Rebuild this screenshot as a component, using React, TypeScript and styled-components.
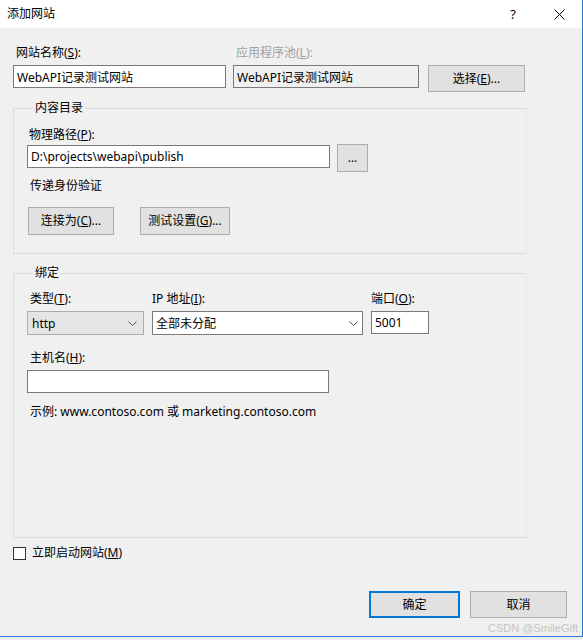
import styled, { createGlobalStyle } from "styled-components";

const GlobalStyle = createGlobalStyle`
  html, body {
    margin: 0;
    padding: 0;
    background: #f0f0f0;
  }
  body {
    font-family: "Noto Sans", "Noto Sans CJK SC", sans-serif;
    font-size: 12px;
    color: #000;
  }
`;

const Window = styled.div`
    position: relative;
    width: 583px;
    height: 637px;
    box-sizing: border-box;
    border-right: 1px solid #2b7bd6;
    border-bottom: 1px solid #2b7bd6;
    background: #f0f0f0;
    display: flex;
    flex-direction: column;
`;

const TitleBar = styled.div`
    height: 28px;
    flex: none;
    background: #fff;
    display: flex;
    align-items: center;
`;

const TitleText = styled.div`
    flex: 1;
    padding-left: 7px;
    line-height: 16px;
`;

const CaptionButton = styled.div`
    width: 46px;
    height: 28px;
    display: flex;
    align-items: center;
    justify-content: center;
    font-size: 13px;
`;

const Content = styled.div`
    padding: 17px 0 0 13px;
    display: flex;
    flex-direction: column;
`;

const TopGrid = styled.div`
    display: grid;
    grid-template-columns: 213px 186px 97px;
    column-gap: 7px;
    row-gap: 4px;
    align-items: start;
`;

const Label = styled.div<{ $indent?: number; $muted?: boolean; $mt?: number }>`
    line-height: 16px;
    padding-left: ${(p) => p.$indent ?? 3}px;
    margin-top: ${(p) => p.$mt ?? 0}px;
    color: ${(p) => (p.$muted ? "#a0a0a0" : "#000")};
    white-space: nowrap;
`;

const TextBox = styled.input<{ $width?: number; $height?: number; $disabled?: boolean }>`
    box-sizing: border-box;
    width: ${(p) => (p.$width ? `${p.$width}px` : "100%")};
    height: ${(p) => p.$height ?? 23}px;
    margin: 0;
    padding: 0 3px;
    border: 1px solid #7a7a7a;
    border-radius: 0;
    background: ${(p) => (p.$disabled ? "#f0f0f0" : "#fff")};
    font: inherit;
    color: #000;
    outline: none;
`;

const Button = styled.div<{ $width: number; $height?: number; $primary?: boolean }>`
    box-sizing: border-box;
    width: ${(p) => p.$width}px;
    height: ${(p) => p.$height ?? 28}px;
    display: flex;
    align-items: center;
    justify-content: center;
    background: #e1e1e1;
    border: ${(p) => (p.$primary ? "2px solid #0078d7" : "1px solid #adadad")};
    line-height: 16px;
    white-space: nowrap;
`;

const SelectButton = styled(Button)`
    margin-left: 2px;
    grid-row: 2;
    grid-column: 3;
`;

const Group = styled.fieldset<{ $mt: number; $pb: number }>`
    box-sizing: border-box;
    width: 514px;
    min-width: 0;
    margin: ${(p) => p.$mt}px 0 0 0;
    padding: 0 0 ${(p) => p.$pb}px 13px;
    border: 1px solid #dcdcdc;
    border-right-color: #e6e6e6;
`;

const Legend = styled.legend`
    margin-left: 6px;
    padding: 0 2px;
    line-height: 16px;
`;

const PathRow = styled.div`
    display: flex;
    align-items: flex-start;
    gap: 7px;
    margin-top: 2px;
`;

const BrowseButton = styled(Button)`
    margin-top: -1px;
`;

const ButtonRow = styled.div`
    display: flex;
    gap: 26px;
    margin-top: 13px;
    padding-left: 1px;
`;

const BindingGrid = styled.div`
    display: grid;
    grid-template-columns: 117px 211px 58px;
    column-gap: 8px;
    row-gap: 4px;
    margin-top: 10px;
    align-items: start;
`;

const ComboBox = styled.div<{ $readonly?: boolean }>`
    box-sizing: border-box;
    height: 24px;
    display: flex;
    align-items: center;
    justify-content: space-between;
    padding: 0 ${(p) => (p.$readonly ? 6 : 4)}px 0 ${(p) => (p.$readonly ? 4 : 3)}px;
    background: ${(p) => (p.$readonly ? "#e5e5e5" : "#fff")};
    border: 1px solid ${(p) => (p.$readonly ? "#acacac" : "#7a7a7a")};
    white-space: nowrap;
`;

const Field = styled.div<{ $mt?: number }>`
    margin-top: ${(p) => p.$mt ?? 0}px;
`;

const CheckRow = styled.label`
    display: flex;
    align-items: center;
    gap: 6px;
    margin-top: 7px;
    line-height: 16px;
`;

const CheckBox = styled.span`
    box-sizing: border-box;
    width: 13px;
    height: 13px;
    border: 1px solid #333;
    background: #fff;
`;

const Footer = styled.div`
    width: 554px;
    display: flex;
    justify-content: flex-end;
    gap: 10px;
    margin-top: 30px;
`;

const Watermark = styled.div`
    position: absolute;
    right: 4px;
    bottom: 1px;
    font-family: "Liberation Sans", Arial, sans-serif;
    font-size: 11px;
    line-height: 14px;
    color: #c4c4c4;
`;

const Chevron = () => (
    <svg width="9" height="5" viewBox="0 0 9 5">
        <polyline points="0.5,0.5 4.5,4.5 8.5,0.5" fill="none" stroke="#555" strokeWidth="1" />
    </svg>
);

const CloseIcon = () => (
    <svg width="11" height="11" viewBox="0 0 11 11">
        <path d="M0.5 0.5 L10.5 10.5 M10.5 0.5 L0.5 10.5" stroke="#000" strokeWidth="1" />
    </svg>
);

export default function App() {
    return (
        <>
            <GlobalStyle />
            <Window>
                <TitleBar>
                    <TitleText>添加网站</TitleText>
                    <CaptionButton>?</CaptionButton>
                    <CaptionButton>
                        <CloseIcon />
                    </CaptionButton>
                </TitleBar>

                <Content>
                    <TopGrid>
                        <Label>
                            网站名称(<u>S</u>):
                        </Label>
                        <Label $muted>
                            应用程序池(<u>L</u>):
                        </Label>
                        <div />
                        <TextBox readOnly value="WebAPI记录测试网站" />
                        <TextBox readOnly $disabled value="WebAPI记录测试网站" />
                        <SelectButton $width={97} $height={27}>
                            选择(<u>E</u>)...
                        </SelectButton>
                    </TopGrid>

                    <Group $mt={8} $pb={18}>
                        <Legend>内容目录</Legend>
                        <Label $indent={2} $mt={11}>
                            物理路径(<u>P</u>):
                        </Label>
                        <PathRow>
                            <TextBox readOnly $width={303} value="D:\projects\webapi\publish" />
                            <BrowseButton $width={31}>...</BrowseButton>
                        </PathRow>
                        <Label $mt={6}>传递身份验证</Label>
                        <ButtonRow>
                            <Button $width={86}>
                                连接为(<u>C</u>)...
                            </Button>
                            <Button $width={90}>
                                测试设置(<u>G</u>)...
                            </Button>
                        </ButtonRow>
                    </Group>

                    <Group $mt={11} $pb={117}>
                        <Legend>绑定</Legend>
                        <BindingGrid>
                            <Label>
                                类型(<u>T</u>):
                            </Label>
                            <Label $indent={0}>
                                IP 地址(<u>I</u>):
                            </Label>
                            <Label $indent={0}>
                                端口(<u>O</u>):
                            </Label>
                            <ComboBox $readonly>
                                <span>http</span>
                                <Chevron />
                            </ComboBox>
                            <ComboBox>
                                <span>全部未分配</span>
                                <Chevron />
                            </ComboBox>
                            <TextBox readOnly value="5001" />
                        </BindingGrid>
                        <Label $mt={15}>
                            主机名(<u>H</u>):
                        </Label>
                        <Field $mt={4}>
                            <TextBox readOnly $width={302} value="" />
                        </Field>
                        <Label $mt={11}>示例: www.contoso.com 或 marketing.contoso.com</Label>
                    </Group>

                    <CheckRow>
                        <CheckBox />
                        <span>
                            立即启动网站(<u>M</u>)
                        </span>
                    </CheckRow>

                    <Footer>
                        <Button $width={91} $height={27} $primary>
                            确定
                        </Button>
                        <Button $width={97} $height={27}>
                            取消
                        </Button>
                    </Footer>
                </Content>

                <Watermark>CSDN @SmileGift</Watermark>
            </Window>
        </>
    );
}
